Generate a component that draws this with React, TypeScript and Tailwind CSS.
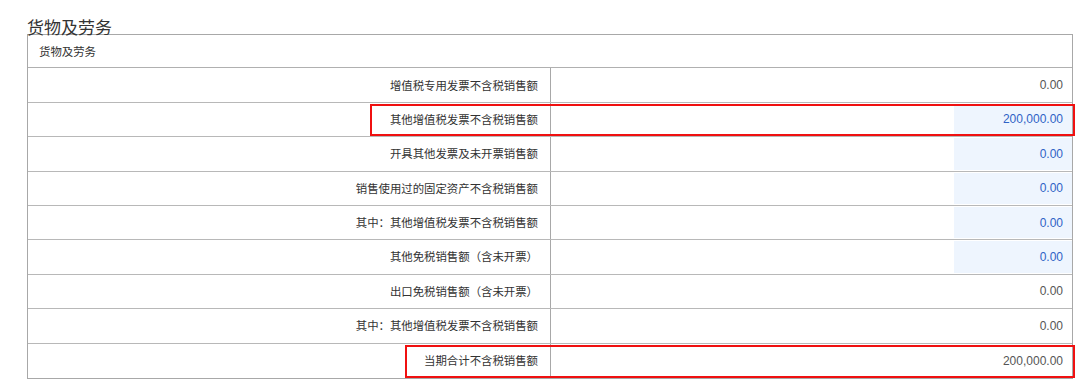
import React from "react";

type Row = { label: string; value: string; input?: boolean; red?: string };

const rows: Row[] = [
  { label: "增值税专用发票不含税销售额", value: "0.00" },
  { label: "其他增值税发票不含税销售额", value: "200,000.00", input: true, red: "left-[342px]" },
  { label: "开具其他发票及未开票销售额", value: "0.00", input: true },
  { label: "销售使用过的固定资产不含税销售额", value: "0.00", input: true },
  { label: "其中：其他增值税发票不含税销售额", value: "0.00", input: true },
  { label: "其他免税销售额（含未开票）", value: "0.00", input: true },
  { label: "出口免税销售额（含未开票）", value: "0.00" },
  { label: "其中：其他增值税发票不含税销售额", value: "0.00" },
  { label: "当期合计不含税销售额", value: "200,000.00", red: "left-[377px]" },
];

export default function App() {
  return (
    <div className="w-[1080px] h-[385px] bg-white overflow-hidden font-['Noto_Sans_CJK_SC','Noto_Sans',sans-serif]">
      <div className="pl-[27px]">
        <div className="h-[34px] flex items-end text-[17px] leading-none text-[#333] relative top-[1px]">
          货物及劳务
        </div>
        <div className="w-[1046px] border border-[#a8a8a8]">
          <div className="h-[33.4px] flex items-center pl-[11px] pt-[1px] text-[11.4px] text-[#333] border-b border-[#b0b0b0]">
            货物及劳务
          </div>
          {rows.map((r, i) => (
            <div
              key={i}
              className={
                "relative flex h-[34.4px] " +
                (i < rows.length - 1 ? "border-b border-[#b8b8b8]" : "")
              }
            >
              <div className="w-[523px] shrink-0 border-r border-[#a8a8a8] flex items-center justify-end pr-[12px] text-[11.4px] text-[#333]">
                {r.label}
              </div>
              <div className="flex-1 flex justify-end py-[1px] font-['Liberation_Sans',Arial,sans-serif] text-[12px]">
                {r.input ? (
                  <div className="w-[118px] bg-[#eef5fe] flex items-center justify-end pr-[9px] text-[#2f62c6]">
                    {r.value}
                  </div>
                ) : (
                  <div className="flex items-center justify-end pr-[9px] text-[#555]">
                    {r.value}
                  </div>
                )}
              </div>
              {r.red && (
                <div
                  className={
                    "absolute top-[1px] bottom-0 right-[-3px] border-2 border-[#f01010] pointer-events-none " +
                    r.red
                  }
                />
              )}
            </div>
          ))}
        </div>
      </div>
    </div>
  );
}
